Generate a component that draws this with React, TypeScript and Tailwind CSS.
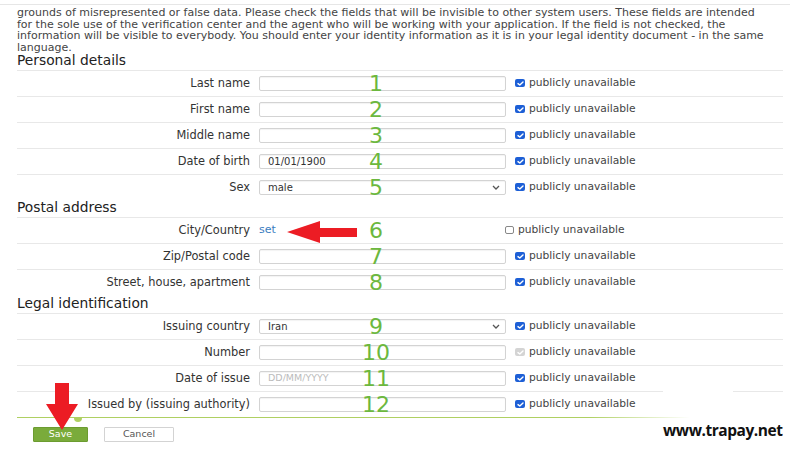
import React from "react";

const font = { fontFamily: '"DejaVu Sans", Verdana, sans-serif' };

function Check({ gray = false }: { gray?: boolean }) {
  return (
    <div
      className={
        gray
          ? "w-[10px] h-[8px] rounded-[2px] bg-[#d4d4d4] flex items-center justify-center"
          : "w-[10px] h-[8px] rounded-[2px] bg-[#1d5fd6] flex items-center justify-center"
      }
    >
      <svg width="7" height="5" viewBox="0 0 7 5">
        <path d="M1 2.6 L2.8 4 L6 1" stroke="white" strokeWidth="1.4" fill="none" strokeLinecap="round" strokeLinejoin="round" />
      </svg>
    </div>
  );
}

function Pub({ gray = false }: { gray?: boolean }) {
  return (
    <div className="ml-[9px] flex items-center">
      <Check gray={gray} />
      <span className="ml-[4px] text-[10.7px] text-[#444] whitespace-nowrap">publicly unavailable</span>
    </div>
  );
}

function Num({ n }: { n: string }) {
  return (
    <div
      className="absolute left-[336px] top-0 h-full w-[46px] flex items-center justify-center text-[22px] leading-none text-[#6cb83e]"
      style={font}
    >
      {n}
    </div>
  );
}

function Chevron() {
  return (
    <svg width="8" height="5" viewBox="0 0 8 5" className="mr-[5px]">
      <path d="M1 1 L4 4 L7 1" stroke="#555" strokeWidth="1.3" fill="none" />
    </svg>
  );
}

function Row({
  label,
  n,
  value,
  placeholder,
  select,
  gray,
}: {
  label: string;
  n: string;
  value?: string;
  placeholder?: string;
  select?: boolean;
  gray?: boolean;
}) {
  return (
    <div className="relative flex h-[26px] items-center border-t border-[#e8e8e8]">
      <div className="w-[233px] text-right text-[11.4px] text-[#333] whitespace-nowrap">{label}</div>
      <div className="ml-[9px] w-[247px] h-[15px] flex items-center justify-between border border-[#d3d3d3] rounded-[2px] bg-white shadow-[inset_0_1px_1px_rgba(0,0,0,0.05)]">
        <span className={placeholder ? "pl-[8px] text-[9.5px] text-[#bbb]" : "pl-[8px] text-[10px] text-[#333]"}>
          {value ?? placeholder ?? ""}
        </span>
        {select ? <Chevron /> : null}
      </div>
      <Pub gray={gray} />
      <Num n={n} />
    </div>
  );
}

function Heading({ children, h }: { children: string; h: string }) {
  return (
    <div className={`${h} flex items-end pb-[2px] text-[13.8px] leading-[16px] text-[#222]`}>{children}</div>
  );
}

export default function App() {
  return (
    <div className="relative w-[800px] h-[450px] overflow-hidden bg-white" style={font}>
      <div className="pt-[4px]">
        <div className="h-[1px] w-[790px] bg-[#e6e6e6]" />
      </div>
      <div className="pl-[17px] pr-[17px]">
        <div className="mt-[2px] text-[11px] leading-[11.5px] text-[#444] whitespace-nowrap">
          <div>grounds of misrepresented or false data. Please check the fields that will be invisible to other system users. These fields are intended</div>
          <div>for the sole use of the verification center and the agent who will be working with your application. If the field is not checked, the</div>
          <div>information will be visible to everybody. You should enter your identity information as it is in your legal identity document - in the same</div>
          <div>language.</div>
        </div>

        <Heading h="h-[17px]">Personal details</Heading>
        <Row label="Last name" n="1" />
        <Row label="First name" n="2" />
        <Row label="Middle name" n="3" />
        <Row label="Date of birth" n="4" value="01/01/1900" />
        <Row label="Sex" n="5" value="male" select />

        <Heading h="h-[17px]">Postal address</Heading>
        <div className="relative flex h-[26px] items-center border-t border-[#e8e8e8]">
          <div className="w-[233px] text-right text-[11.4px] text-[#333] whitespace-nowrap">City/Country</div>
          <div className="ml-[9px] w-[246px] text-[11px] text-[#3a7cc0]">set</div>
          <div className="flex items-center">
            <div className="w-[9px] h-[8px] rounded-[2px] border border-[#888] bg-white" />
            <span className="ml-[4px] text-[10.7px] text-[#444] whitespace-nowrap">publicly unavailable</span>
          </div>
          <Num n="6" />
        </div>
        <Row label="Zip/Postal code" n="7" />
        <Row label="Street, house, apartment" n="8" />

        <Heading h="h-[18px]">Legal identification</Heading>
        <Row label="Issuing country" n="9" value="Iran" select />
        <Row label="Number" n="10" gray />
        <Row label="Date of issue" n="11" placeholder="DD/MM/YYYY" />
        <Row label="Issued by (issuing authority)" n="12" />

        <div className="relative h-[1px] w-[673px] bg-[linear-gradient(to_right,#afd062_85%,rgba(175,208,98,0))]">
          <div className="absolute left-[57px] top-[1px] w-[8px] h-[4px] rounded-b-full bg-[#afd062]" />
        </div>

        <div className="mt-[9px] flex items-center">
          <div className="ml-[16px] w-[55px] h-[15px] flex items-center justify-center rounded-[1px] bg-[#7aab3b] border border-[#6c9c30] text-[9.5px] text-white">
            Save
          </div>
          <div className="ml-[16px] w-[70px] h-[15px] flex items-center justify-center rounded-[1px] bg-white border border-[#d3d3d3] text-[9.5px] text-[#555]">
            Cancel
          </div>
        </div>
      </div>

      {/* white patch over separator */}
      <div className="absolute left-[663px] top-[386px] w-[70px] h-[9px] bg-white" />

      {/* left arrow */}
      <svg className="absolute left-[287px] top-[221px]" width="70" height="22" viewBox="0 0 70 22">
        <polygon points="0,11 33,0 33,7 70,7 70,16 33,16 33,22" fill="#ec1c24" />
      </svg>

      {/* down arrow */}
      <svg className="absolute left-[46px] top-[383px]" width="32" height="48" viewBox="0 0 32 48">
        <polygon points="9,0 23,0 23,21 32,21 16,47 0,21 9,21" fill="#ec1c24" />
      </svg>

      <div
        className="absolute left-[663px] top-[421px] text-[15.5px] font-bold leading-[18px] tracking-[-0.45px] text-[#111] whitespace-nowrap"
        style={{ fontFamily: '"Open Sans", sans-serif' }}
      >
        www.trapay.net
      </div>
    </div>
  );
}
